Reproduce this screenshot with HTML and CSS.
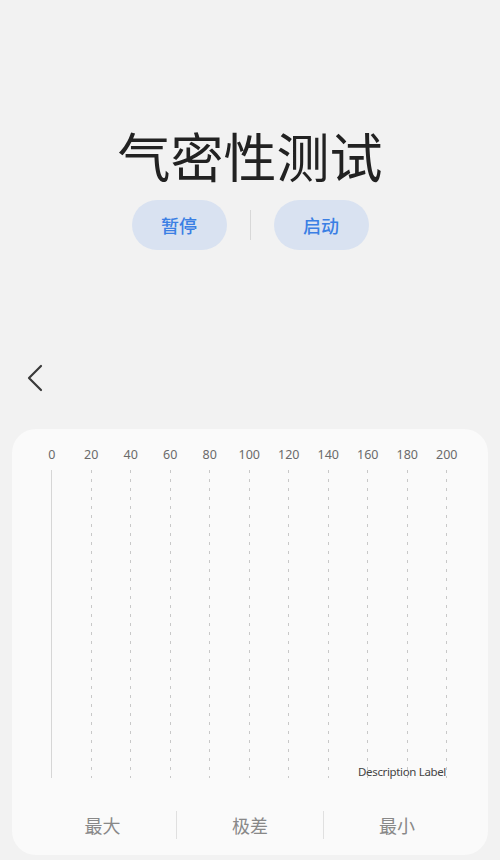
FILE: index.html
```html
<!DOCTYPE html>
<html lang="zh">
<head>
<meta charset="utf-8">
<link rel="stylesheet" href="styles.css">
</head>
<body>
<div class="page">
  <h1 class="title">气密性测试</h1>
  <div class="actions">
    <button class="pill">暂停</button>
    <span class="vdiv"></span>
    <button class="pill">启动</button>
  </div>
  <div class="back">
    <svg width="18" height="28" viewBox="0 0 18 28"><path d="M15 2 L3 14 L15 26" fill="none" stroke="#3a3a3a" stroke-width="2.2" stroke-linecap="round" stroke-linejoin="round"/></svg>
  </div>
  <div class="card">
    <div class="chart">
      <div class="col first"><span class="tick">0</span><span class="line"></span></div>
      <div class="col"><span class="tick">20</span><span class="line"></span></div>
      <div class="col"><span class="tick">40</span><span class="line"></span></div>
      <div class="col"><span class="tick">60</span><span class="line"></span></div>
      <div class="col"><span class="tick">80</span><span class="line"></span></div>
      <div class="col"><span class="tick">100</span><span class="line"></span></div>
      <div class="col"><span class="tick">120</span><span class="line"></span></div>
      <div class="col"><span class="tick">140</span><span class="line"></span></div>
      <div class="col"><span class="tick">160</span><span class="line"></span></div>
      <div class="col"><span class="tick">180</span><span class="line"></span></div>
      <div class="col"><span class="tick">200</span><span class="line"></span></div>
      <span class="desc">Description Label</span>
    </div>
    <div class="stats">
      <div class="stat">最大</div>
      <div class="stat sep">极差</div>
      <div class="stat sep">最小</div>
    </div>
  </div>
</div>
</body>
</html>
```
FILE: styles.css
```css
* { box-sizing: border-box; }
html, body {
  margin: 0;
  padding: 0;
  background: #f2f2f2;
  font-family: "Noto Sans CJK SC", "Noto Sans", sans-serif;
}
.page {
  width: 500px;
  height: 860px;
  overflow: hidden;
  padding-top: 122px;
}
.title {
  margin: 0;
  text-align: center;
  font-size: 53px;
  line-height: 66px;
  font-weight: 400;
  color: #222;
  letter-spacing: 0;
}
.actions {
  margin-top: 12px;
  display: flex;
  justify-content: center;
  align-items: center;
  gap: 23px;
}
.pill {
  width: 95px;
  height: 50px;
  border: none;
  border-radius: 25px;
  background: #d9e2f1;
  color: #3b7fe4;
  font-family: "Noto Sans CJK SC", sans-serif;
  font-size: 18px;
  font-weight: 500;
  padding: 0;
}
.vdiv {
  width: 1px;
  height: 30px;
  background: #d8d8d8;
}
.back {
  margin-top: 114px;
  padding-left: 26px;
  height: 30px;
}
.back svg { display: block; }
.card {
  margin: 35px 12px 0;
  height: 426px;
  background: #fafafa;
  border-radius: 24px;
  padding-top: 17px;
}
.chart {
  position: relative;
  display: flex;
  padding-left: 20px;
  height: 334px;
}
.col {
  width: 39.5px;
  display: flex;
  flex-direction: column;
  align-items: center;
}
.tick {
  font-family: "Noto Sans", sans-serif;
  font-size: 12.5px;
  line-height: 18px;
  color: #6a6a6a;
}
.line {
  margin-top: 6px;
  width: 1px;
  height: 308px;
  background: repeating-linear-gradient(to bottom, #c8c8c8 0 3px, transparent 3px 9px);
}
.first .line {
  background: #d6d6d6;
}
.desc {
  position: absolute;
  right: 42px;
  top: 319px;
  font-family: "Noto Sans", sans-serif;
  font-size: 11.5px;
  line-height: 14px;
  color: #444;
  letter-spacing: -0.35px;
}
.stats {
  margin-top: 31px;
  display: flex;
  padding-left: 17px;
}
.stat {
  width: 147px;
  text-align: center;
  font-size: 18px;
  line-height: 28px;
  color: #888;
}
.stat.sep {
  border-left: 1px solid #e0e0e0;
}
```
